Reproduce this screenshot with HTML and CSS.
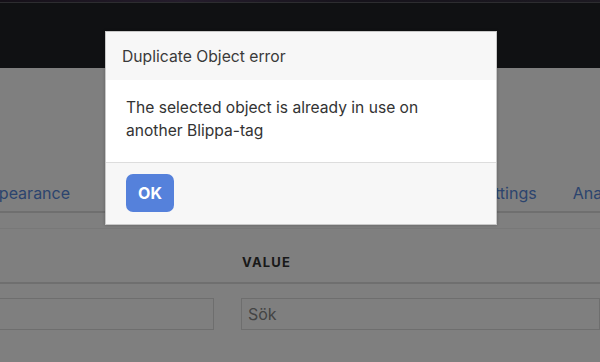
FILE: index.html
```html
<!DOCTYPE html>
<html>

<head>
  <title>Blippa-tag</title>
  <link rel="stylesheet" href="styles.css">
</head>

<body>
  <div class="strip"></div>
  <div class="topbar"></div>

  <div class="page">
    <div class="tabs">
      <div class="tab-group">
        <a class="tab">Appearance</a>
        <a class="tab">Content</a>
      </div>
      <div class="tab-group">
        <a class="tab">Tag settings</a>
        <a class="tab">Analytics</a>
      </div>
    </div>

    <div class="table">
      <div class="table-head">
        <div class="cell">Key</div>
        <div class="cell">Value</div>
      </div>
      <div class="table-row">
        <div class="cell"><input type="text" class="field" value=""></div>
        <div class="cell"><input type="text" class="field" value="Sök"></div>
      </div>
    </div>
  </div>

  <div class="overlay"></div>

  <div class="dialog">
    <div class="dialog-header">Duplicate Object error</div>
    <div class="dialog-body">The selected object is already in use on another Blippa-tag</div>
    <div class="dialog-footer">
      <button class="button-ok">OK</button>
    </div>
  </div>
</body>

</html>
```

FILE: styles.css
```css
body {
  margin: 0;
  font-family: Inter, "Noto Sans", sans-serif;
  background-color: #fff;
  overflow: hidden;
}

.strip {
  height: 2px;
  background: linear-gradient(90deg, #2a2030, #4a3a58 30%, #2c2636 60%, #3a3444);
  border-bottom: 1px solid #5a5a60;
}

.topbar {
  height: 65px;
  background-color: #202227;
}

.page {
  padding-top: 115px;
}

.tabs {
  display: flex;
  justify-content: space-between;
  margin-left: -22px;
  margin-right: -42px;
  padding-bottom: 8px;
  border-bottom: 2px solid #dedede;
  white-space: nowrap;
}

.tab-group {
  display: flex;
  gap: 36px;
}

.tab {
  font-size: 16px;
  line-height: 20px;
  color: #5889dc;
}

.table {
  margin-top: 15px;
  margin-left: -30px;
  border-top: 1px solid #f0f0f0;
}

.table-head,
.table-row {
  display: grid;
  grid-template-columns: 244px 1fr;
  column-gap: 27px;
}

.table-head {
  height: 53px;
  align-items: center;
  border-bottom: 2px solid #dedede;
}

.table-head .cell {
  font-size: 13px;
  font-weight: 700;
  letter-spacing: 1.2px;
  text-transform: uppercase;
  color: #333;
  padding-top: 13px;
  padding-left: 1px;
}

.table-head .cell:first-child {
  visibility: hidden;
}

.table-row {
  padding-top: 14px;
}

.field {
  box-sizing: border-box;
  width: 100%;
  height: 32px;
  border: 1px solid #ddd;
  padding: 0 6px;
  font-family: Inter, "Noto Sans", sans-serif;
  font-size: 16px;
  color: #888;
  background-color: #fff;
}

.overlay {
  position: absolute;
  top: 0;
  left: 0;
  right: 0;
  bottom: 0;
  background-color: rgba(0, 0, 0, 0.5);
}

.dialog {
  position: absolute;
  top: 31px;
  left: 105px;
  width: 390px;
  border: 1px solid #c8c8c8;
  background-color: #f7f7f7;
  box-shadow: 0 0 3px rgba(0, 0, 0, 0.25);
}

.dialog-header {
  height: 48px;
  padding-left: 16px;
  display: flex;
  align-items: center;
  font-size: 15.7px;
  color: #3a3a3a;
  background-color: #f7f7f7;
}

.dialog-body {
  padding: 16px 60px 20px 20px;
  font-size: 15.6px;
  line-height: 23px;
  color: #333;
  background-color: #fff;
  border-bottom: 1px solid #ddd;
}

.dialog-footer {
  padding: 11px 20px 12px;
}

.button-ok {
  width: 48px;
  height: 38px;
  border: none;
  border-radius: 7px;
  background-color: #5581db;
  color: #fff;
  font-family: Inter, "Noto Sans", sans-serif;
  font-size: 16px;
  font-weight: 700;
  cursor: pointer;
}
```
